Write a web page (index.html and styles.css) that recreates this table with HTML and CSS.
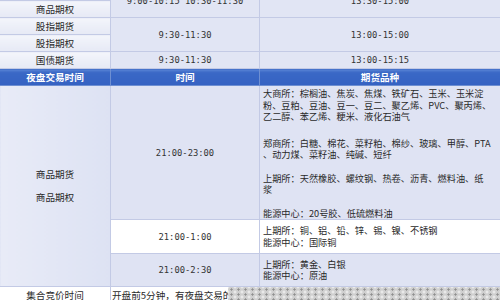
FILE: index.html
```html
<!DOCTYPE html>
<html lang="zh">
<head>
<meta charset="utf-8">
<link rel="stylesheet" href="styles.css">
</head>
<body>
<div class="frame">
<table class="sched">
  <colgroup><col class="c1"><col class="c2"><col class="c3"></colgroup>
  <tr class="r-top">
    <td class="name">商品期货</td>
    <td class="time" rowspan="2">9:00-10:15 10:30-11:30</td>
    <td class="time" rowspan="2">13:30-15:00</td>
  </tr>
  <tr class="r-top"><td class="name">商品期权</td></tr>
  <tr class="r-top">
    <td class="name">股指期货</td>
    <td class="time" rowspan="2">9:30-11:30</td>
    <td class="time" rowspan="2">13:00-15:00</td>
  </tr>
  <tr class="r-top"><td class="name">股指期权</td></tr>
  <tr class="r-top">
    <td class="name">国债期货</td>
    <td class="time">9:30-11:30</td>
    <td class="time">13:00-15:15</td>
  </tr>
  <tr class="head">
    <th>夜盘交易时间</th>
    <th>时间</th>
    <th>期货品种</th>
  </tr>
  <tr class="n1">
    <td class="night-name" rowspan="3">
      <p class="np">商品期货</p>
      <p class="np">商品期权</p>
    </td>
    <td class="time blue">21:00-23:00</td>
    <td class="goods blue top">
      <p class="g first">大商所：棕榈油、焦炭、焦煤、铁矿石、玉米、玉米淀<br>粉、豆粕、豆油、豆一、豆二、聚乙烯、PVC、聚丙烯、<br>乙二醇、苯乙烯、粳米、液化石油气</p>
      <p class="g">郑商所：白糖、棉花、菜籽粕、棉纱、玻璃、甲醇、PTA<br>、动力煤、菜籽油、纯碱、短纤</p>
      <p class="g">上期所：天然橡胶、螺纹钢、热卷、沥青、燃料油、纸<br>浆</p>
      <p class="g last">能源中心：20号胶、低硫燃料油</p>
    </td>
  </tr>
  <tr class="n2">
    <td class="time white">21:00-1:00</td>
    <td class="goods white"><p class="g last">上期所：铜、铝、铅、锌、锡、镍、不锈钢<br>能源中心：国际铜</p></td>
  </tr>
  <tr class="n3">
    <td class="time blue">21:00-2:30</td>
    <td class="goods blue"><p class="g last">上期所：黄金、白银<br>能源中心：原油</p></td>
  </tr>
  <tr class="last-row">
    <td class="name white">集合竞价时间</td>
    <td class="auction" colspan="2"><span class="atext">开盘前5分钟，有夜盘交易的</span><span class="mosaic"></span></td>
  </tr>
</table>
</div>
</body>
</html>
```

FILE: styles.css
```css
html, body {
  margin: 0;
  padding: 0;
  background: #ffffff;
}
.frame {
  width: 500px;
  height: 300px;
  overflow: hidden;
}
.sched {
  width: 501px;
  margin-top: -17px;
  margin-left: -1px;
  border-collapse: collapse;
  table-layout: fixed;
  font-family: "Noto Sans CJK SC", "Noto Sans", sans-serif;
  font-size: 9.6px;
  color: #2a2a2a;
}
.c1 { width: 111px; }
.c2 { width: 149px; }
.c3 { width: 241px; }
td, th {
  border: 1px solid #c3cae5;
  padding: 0;
}
.r-top td { height: 16px; }
.name {
  text-align: center;
  background: linear-gradient(#f3f5fb, #e6e9f5);
  line-height: 12px;
}
.time {
  text-align: center;
  font-family: "DejaVu Sans Mono", "Liberation Mono", monospace;
  font-size: 8.8px;
  color: #333333;
  background: #e1e5f4;
}
.head th {
  height: 16px;
  background: linear-gradient(#5b86d6 0, #3a68c6 3px, #3562c2 100%);
  color: #ffffff;
  font-weight: bold;
  font-size: 9.6px;
  text-align: center;
  border-color: #6e8fd2;
}
.night-name {
  text-align: center;
  vertical-align: middle;
  background: linear-gradient(90deg, #e8ebf7, #dde2f3);
}
.np {
  margin: 0;
  line-height: 11.5px;
}
.np + .np { margin-top: 12px; }
.blue { background: #dfe3f3; }
.white { background: #ffffff; }
.goods {
  padding: 0 0 0 3px;
  white-space: nowrap;
  overflow: hidden;
  vertical-align: middle;
  font-size: 9.2px;
}
.goods.top {
  vertical-align: top;
  padding-top: 2px;
}
.g {
  margin: 0 0 12px;
  line-height: 11.5px;
}
.g.first { margin-bottom: 15px; }
.g.last { margin-bottom: 0; }
.n1 td { height: 131px; }
.n2 td { height: 33px; }
.n3 td { height: 32px; }
.last-row td { height: 16px; }
.auction {
  padding: 0;
  background: #ffffff;
  white-space: nowrap;
}
.atext {
  display: inline-block;
  vertical-align: top;
  line-height: 16px;
  padding-left: 1px;
  width: 116px;
}
.mosaic {
  display: inline-block;
  vertical-align: top;
  width: 273px;
  height: 16px;
  background-color: #cfcfcf;
  background-image:
    radial-gradient(circle, #8f8f8f 0.9px, transparent 1.3px),
    radial-gradient(circle, #f2f2f2 1px, transparent 1.4px);
  background-size: 7px 5px, 7px 5px;
  background-position: 0 0, 3.5px 2.5px;
}
```
